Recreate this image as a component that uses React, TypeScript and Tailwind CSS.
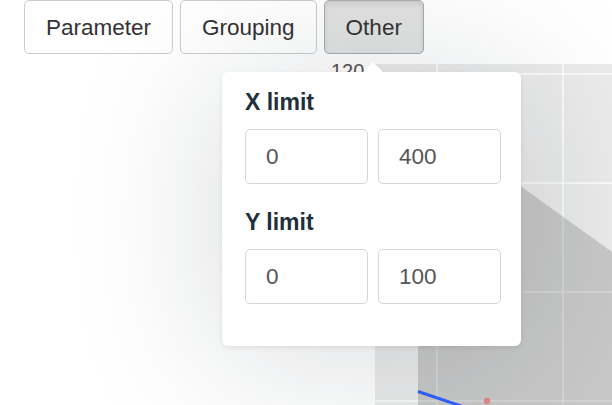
import React from "react";

const sans = { fontFamily: '"Liberation Sans", Arial, sans-serif' };

function Chart() {
  return (
    <svg className="absolute inset-0" width={612} height={405} viewBox="0 0 612 405">
      <text x={331} y={78} fontSize={20} fill="#555" fontFamily="Liberation Sans, Arial, sans-serif">120</text>
      <rect x={375} y={64} width={240} height={345} fill="#ebebeb" />
      <g stroke="#ffffff" strokeWidth={1.5}>
        <line x1={437} y1={64} x2={437} y2={405} />
        <line x1={563} y1={64} x2={563} y2={405} />
        <line x1={375} y1={74} x2={612} y2={74} />
        <line x1={375} y1={183} x2={612} y2={183} />
        <line x1={375} y1={292} x2={612} y2={292} />
        <line x1={375} y1={401} x2={612} y2={401} />
      </g>
      <polygon points="418,112 612,252 612,405 418,405" fill="rgba(0,0,0,0.15)" />
      <line x1={418} y1={391.5} x2={470} y2={409} stroke="#2f5fff" strokeWidth={3} />
      <circle cx={487} cy={401} r={3.2} fill="#e08a8a" />
    </svg>
  );
}

function NumInput({ value }: { value: string }) {
  return (
    <div
      className="w-[123px] h-[55px] rounded-[5px] border border-[#d6d6d6] bg-white flex items-center pl-[20px] text-[22.5px] text-[#555]"
      style={sans}
    >
      {value}
    </div>
  );
}

function Group({ label, a, b, first }: { label: string; a: string; b: string; first?: boolean }) {
  return (
    <div className={first ? "" : "mt-[25px]"}>
      <div className="text-[23px] leading-[27px] font-bold text-[#222f3b] mb-[13px]" style={sans}>
        {label}
      </div>
      <div className="flex gap-[10px]">
        <NumInput value={a} />
        <NumInput value={b} />
      </div>
    </div>
  );
}

export default function App() {
  const btn =
    "h-[54px] px-[21px] pt-[1px] rounded-[5px] border text-[22.5px] text-[#333] flex items-center";
  return (
    <div className="relative w-[612px] h-[405px] overflow-hidden bg-white" style={sans}>
      <Chart />
      <div className="relative flex gap-[7px] pl-[24px]">
        <button className={`${btn} border-[#cccccc] bg-white`}>Parameter</button>
        <button className={`${btn} border-[#cccccc] bg-white`}>Grouping</button>
        <button
          className={`${btn} border-[#adadad] bg-[#e3e3e3] shadow-[inset_0_3px_5px_rgba(0,0,0,0.1)]`}
        >
          Other
        </button>
      </div>
      <div className="absolute left-[222px] top-[72px] w-[299px] bg-white rounded-[6px] pl-[23px] pt-[17px] pb-[42px] shadow-[0_10px_150px_rgba(20,30,40,0.17),0_2px_5px_rgba(0,0,0,0.08)]">
        <div className="absolute left-[144px] top-[-7px] w-[14px] h-[14px] bg-white rotate-45" />
        <div className="relative">
          <Group label="X limit" a="0" b="400" first />
          <Group label="Y limit" a="0" b="100" />
        </div>
      </div>
    </div>
  );
}
